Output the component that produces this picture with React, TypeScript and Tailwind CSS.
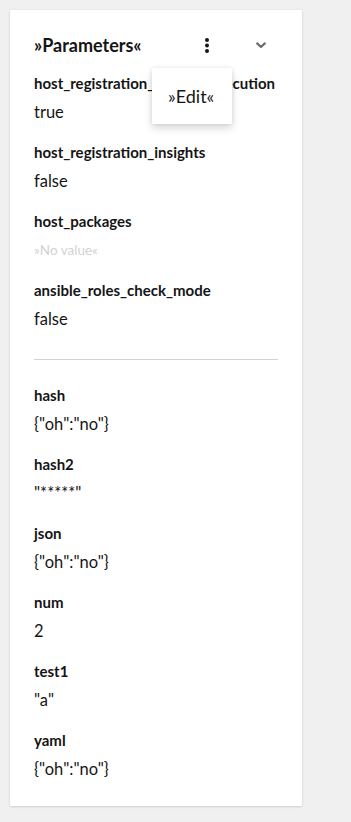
import React from "react"

type Param = { name: string; value: string; empty?: boolean }

const inherited: Param[] = [
  { name: "host_registration_remote_execution", value: "true" },
  { name: "host_registration_insights", value: "false" },
  { name: "host_packages", value: "»No value«", empty: true },
  { name: "ansible_roles_check_mode", value: "false" },
]

const own: Param[] = [
  { name: "hash", value: '{"oh":"no"}' },
  { name: "hash2", value: '"*****"' },
  { name: "json", value: '{"oh":"no"}' },
  { name: "num", value: "2" },
  { name: "test1", value: '"a"' },
  { name: "yaml", value: '{"oh":"no"}' },
]

function KebabIcon() {
  return (
    <svg width="4" height="15" viewBox="0 0 4 15" fill="#151515">
      <circle cx="2" cy="2" r="2" />
      <circle cx="2" cy="7.5" r="2" />
      <circle cx="2" cy="13" r="2" />
    </svg>
  )
}

function ChevronIcon() {
  return (
    <svg width="10" height="7" viewBox="0 0 10 7" fill="none">
      <path d="M1.2 1.4 L5 5 L8.8 1.4" stroke="#6a6e73" strokeWidth="2.2" strokeLinecap="round" strokeLinejoin="round" />
    </svg>
  )
}

function ParamRow({ p }: { p: Param }) {
  return (
    <div className="mb-[18px] last:mb-0">
      <div className="text-[15px] leading-[20px] font-bold text-[#151515] whitespace-nowrap">{p.name}</div>
      <div
        className={
          "mt-[7px] leading-[24px] " + (p.empty ? "text-[#d2d2d2] text-[13.5px]" : "text-[#151515] text-[16.5px]")
        }
      >
        {p.value}
      </div>
    </div>
  )
}

export default function App() {
  return (
    <div
      className="min-h-screen bg-[#f0f0f0] pt-[10px] pl-[10px] pb-[17px]"
      style={{ fontFamily: "Lato, 'Liberation Sans', sans-serif" }}
    >
      <div className="relative w-[292px] bg-white shadow-[0_1px_2px_rgba(3,3,3,0.12),0_0_2px_rgba(3,3,3,0.06)]">
        {/* header */}
        <div className="flex items-center px-6 pt-6">
          <h2 className="flex-1 text-[18px] leading-[22px] font-bold text-[#151515]">»Parameters«</h2>
          <button className="w-9 h-[22px] flex items-center justify-center">
            <KebabIcon />
          </button>
          <button className="ml-[19px] w-[34px] h-[22px] flex items-center justify-center">
            <ChevronIcon />
          </button>
        </div>

        {/* dropdown menu */}
        <div className="absolute left-[142px] top-[58px] w-[80px] bg-white py-4 px-4 shadow-[0_4px_8px_rgba(3,3,3,0.16),0_0_4px_rgba(3,3,3,0.08)] z-10">
          <div className="text-[18px] leading-[24px] text-[#151515] whitespace-nowrap">»Edit«</div>
        </div>

        <div className="px-6 pt-[17px] pb-[25px]">
          <div className="overflow-hidden">
            {inherited.map((p) => (
              <ParamRow key={p.name} p={p} />
            ))}
          </div>
          <div className="mt-[28px] mb-[25px] h-px bg-[#d2d2d2]" />
          <div>
            {own.map((p) => (
              <ParamRow key={p.name} p={p} />
            ))}
          </div>
        </div>
      </div>
    </div>
  )
}
